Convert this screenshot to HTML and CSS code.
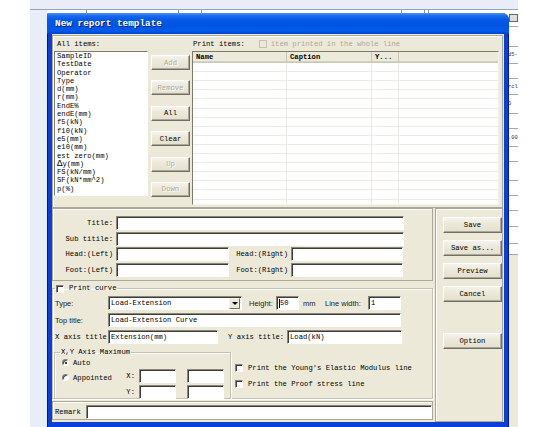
FILE: index.html
```html
<!DOCTYPE html>
<html lang="en">
<head>
    <meta charset="UTF-8">
    <meta name="viewport" content="width=device-width, initial-scale=1.0">
    <title>New report template</title>
    <link rel="stylesheet" href="styles.css">
</head>
<body>
<div class="desk">

    <!-- window behind the dialog -->
    <div class="backwin">
        <div class="back-top"></div>
        <div class="back-body">
            <span class="first"></span><span></span><span></span><span></span><span></span><span></span><span></span>
            <div class="back-side">
                <div><span class="bs-icon"></span></div>
                <div></div>
                <div>d5-</div>
                <div></div>
                <div>rcl</div>
                <div>D</div>
                <div></div>
                <div>.00</div>
                <div></div>
                <div></div>
                <div></div>
                <div></div>
                <div></div>
                <div></div>
                <div></div>
                <div class="bs-end"></div>
            </div>
        </div>
    </div>

    <div class="dialog">
        <div class="titlebar">New report template</div>
        <div class="client">

            <div class="panel items">
                <div class="col-all">
                    <div class="lbl">All items:</div>
                    <div class="listbox">
                        <div>SampleID</div>
                        <div>TestDate</div>
                        <div>Operator</div>
                        <div>Type</div>
                        <div>d(mm)</div>
                        <div>r(mm)</div>
                        <div>EndE%</div>
                        <div>endE(mm)</div>
                        <div>f5(kN)</div>
                        <div>f10(kN)</div>
                        <div>e5(mm)</div>
                        <div>e10(mm)</div>
                        <div>est zero(mm)</div>
                        <div><span class="delta">Δ</span>y(mm)</div>
                        <div>FS(kN/mm)</div>
                        <div>SF(kN*mm^2)</div>
                        <div>p(%)</div>
                    </div>
                </div>
                <div class="col-btns">
                    <button class="btn" disabled>Add</button>
                    <button class="btn" disabled>Remove</button>
                    <button class="btn">All</button>
                    <button class="btn">Clear</button>
                    <button class="btn" disabled>Up</button>
                    <button class="btn" disabled>Down</button>
                </div>
                <div class="col-print">
                    <div class="lbl print-head">
                        <span>Print items:</span>
                        <span class="chk off"></span>
                        <span class="dim">item printed in the whole line</span>
                    </div>
                    <div class="listview">
                        <div class="lv-head">
                            <span class="c-name">Name</span>
                            <span class="c-cap">Caption</span>
                            <span class="c-y">Y...</span>
                            <span class="c-rest"></span>
                        </div>
                        <div class="lv-body">
                            <span class="c-name"></span>
                            <span class="c-cap"></span>
                            <span class="c-y"></span>
                            <span class="c-rest"></span>
                        </div>
                    </div>
                </div>
            </div>

            <div class="lower">
                <div class="lower-left">
                    <div class="panel heads">
                        <label class="rl">Title:</label>
                        <input class="fld span3" type="text">
                        <label class="rl">Sub titile:</label>
                        <input class="fld span3" type="text">
                        <label class="rl">Head:(Left)</label>
                        <input class="fld" type="text">
                        <label class="rl">Head:(Right)</label>
                        <input class="fld" type="text">
                        <label class="rl">Foot:(Left)</label>
                        <input class="fld" type="text">
                        <label class="rl">Foot:(Right)</label>
                        <input class="fld" type="text">
                    </div>

                    <fieldset class="group curve">
                        <legend><span class="chk"></span>Print curve</legend>
                        <div class="row">
                            <span class="sans w-lab">Type:</span>
                            <div class="fld combo"><span>Load-Extension</span><span class="drop"></span></div>
                            <span class="sans w-height">Height:</span>
                            <div class="fld w-hin"><span class="caret"></span>50</div>
                            <span class="sans w-mm">mm</span>
                            <span class="sans w-lw">Line width:</span>
                            <input class="fld w-lwin" type="text" value="1">
                        </div>
                        <div class="row">
                            <span class="sans w-lab">Top title:</span>
                            <input class="fld w-top" type="text" value="Load-Extension Curve">
                        </div>
                        <div class="row">
                            <span class="w-lab">X axis title</span>
                            <input class="fld w-x" type="text" value="Extension(mm)">
                            <span class="w-ylab">Y axis title:</span>
                            <input class="fld w-y" type="text" value="Load(kN)">
                        </div>
                        <div class="row bottom">
                            <fieldset class="group axis">
                                <legend>X,Y Axis Maximum</legend>
                                <div class="radio-row"><span class="radio on"></span>Auto</div>
                                <div class="axis-grid">
                                    <div class="radio-row"><span class="radio"></span>Appointed</div>
                                    <span class="xy">X:</span>
                                    <input class="fld" type="text">
                                    <input class="fld" type="text">
                                    <span></span>
                                    <span class="xy">Y:</span>
                                    <input class="fld" type="text">
                                    <input class="fld" type="text">
                                </div>
                            </fieldset>
                            <div class="checks">
                                <div class="check-row"><span class="chk"></span>Print the Young's Elastic Modulus line</div>
                                <div class="check-row"><span class="chk"></span>Print the Proof stress line</div>
                            </div>
                        </div>
                    </fieldset>

                    <div class="panel remark">
                        <span class="w-rem">Remark</span>
                        <input class="fld" type="text">
                    </div>
                </div>

                <div class="panel side">
                    <button class="btn big">Save</button>
                    <button class="btn big">Save as...</button>
                    <button class="btn big">Preview</button>
                    <button class="btn big">Cancel</button>
                    <button class="btn big option">Option</button>
                </div>
            </div>

        </div>
    </div>
</div>
</body>
</html>
```

FILE: styles.css
```css
* {
    box-sizing: border-box;
}
body {
    margin: 0;
    background: #fff;
    font-family: "Liberation Mono", "DejaVu Sans Mono", monospace;
    font-size: 7.2px;
    color: #000;
}
.desk {
    position: relative;
    width: 550px;
    height: 427px;
    overflow: hidden;
}

/* window behind */
.backwin {
    position: absolute;
    left: 30px;
    top: 0;
    width: 488px;
    height: 427px;
    background: #e8edf7;
    display: flex;
    flex-direction: column;
}
.back-top {
    height: 10px;
    border-bottom: 1px solid #9ca4b2;
}
.back-body {
    flex: 1;
    display: grid;
    grid-template-columns: 56px 92px 23px 200px 23px 4px 80px 10px;
}
.back-body > span {
    background: #fff;
    border-left: 1px solid #8d8d8d;
}
.back-body > span.first {
    border-left: 0;
    background: linear-gradient(to right, #e8edf7 17px, #fff 17px);
}
.back-side {
    display: grid;
    grid-template-rows: 17px 20px 17px 15px 16px 19px 15px 18px 15px 19px 15px 15px 16px 17px 11px 1fr;
    background: #fff;
    overflow: hidden;
    font-size: 5.4px;
    color: #333;
    white-space: nowrap;
}
.back-side > div {
    border-bottom: 1px solid #a7a7a7;
    overflow: hidden;
    display: flex;
    align-items: center;
}
.back-side > .bs-end {
    background: #ece9d8;
    border: 0;
}
.bs-icon {
    width: 9px;
    height: 8px;
    margin-left: 1px;
    border: 1px solid #666;
    background: #ddd;
}

/* dialog */
.dialog {
    position: absolute;
    left: 47px;
    top: 13px;
    width: 462px;
    height: 416px;
    background: #0a40d8;
    border: 1px solid #001a80;
    border-top: 0;
    border-radius: 2px 7px 0 0;
    display: flex;
    flex-direction: column;
}
.titlebar {
    height: 21px;
    margin: 0 -1px;
    padding-left: 8px;
    display: flex;
    align-items: center;
    color: #fff;
    font-weight: bold;
    font-size: 9.4px;
    text-shadow: 1px 1px #0a1e80;
    border-radius: 2px 7px 0 0;
    background: linear-gradient(to bottom, #4a93f5 0, #1768ec 3px, #0558e6 7px, #0054e3 13px, #025ae9 18px, #0040cc 21px);
}
.client {
    height: 388px;
    margin: 0 4px;
    padding: 1px 1px 0 0;
    background: #ece9d8;
    display: flex;
    flex-direction: column;
}
.panel {
    border: 1px solid #aca899;
    box-shadow: inset 1px 1px #fff;
}

/* top panel */
.items {
    height: 173px;
    display: flex;
    padding-left: 1px;
}
.lbl {
    height: 15px;
    line-height: 16px;
    padding-left: 3px;
}
.col-all {
    width: 94px;
}
.listbox {
    height: 145px;
    background: #fff;
    border: 1px solid;
    border-color: #7d7a6c #fff #fff #7d7a6c;
    padding: 0 0 0 2px;
    line-height: 8.3px;
    white-space: nowrap;
    overflow: hidden;
}
.delta {
    font-size: 9px;
}
.col-btns {
    width: 39px;
    margin-left: 3px;
    padding-top: 19px;
    display: flex;
    flex-direction: column;
    gap: 10.4px;
}
.btn {
    font: inherit;
    color: #000;
    height: 15px;
    padding: 0;
    background: linear-gradient(#f4f3ee, #ece9d8 40%, #e3e0d0);
    border: 1px solid;
    border-color: #fff #716f64 #716f64 #fff;
    box-shadow: inset -1px -1px #aca899;
}
.btn:disabled {
    color: #aca899;
    text-shadow: 1px 1px #fff;
}
.col-print {
    width: 307px;
    margin-left: 2px;
}
.print-head {
    display: flex;
    align-items: center;
    padding-left: 1px;
}
.print-head .chk {
    margin: 0 4px 0 14px;
}
.dim {
    color: #aca899;
}
.chk {
    display: inline-block;
    width: 8px;
    height: 8px;
    background: #fff;
    border: 1px solid;
    border-color: #808080 #fff #fff #808080;
    box-shadow: inset 1px 1px #404040;
    flex: none;
}
.chk.off {
    background: #ece9d8;
    border-color: #c4c1b3;
    box-shadow: none;
}
.listview {
    height: 154px;
    border: 1px solid;
    border-color: #7d7a6c #f4f3ee #f4f3ee #7d7a6c;
    background: #fff;
    display: flex;
    flex-direction: column;
}
.lv-head,
.lv-body {
    display: flex;
}
.lv-head {
    height: 11px;
    background: #ebeadb;
    border-bottom: 1px solid #cbc7b8;
    box-shadow: inset 0 -1px #d6d2c2;
    font-weight: bold;
    line-height: 10px;
}
.lv-head span {
    padding-left: 3px;
    border-right: 1px solid #c9c6b6;
}
.lv-body {
    flex: 1;
    background: repeating-linear-gradient(to bottom, #fff 0, #fff 8.1px, #eceae2 8.1px, #eceae2 9.1px);
}
.lv-body span {
    border-right: 1px solid #ecebe2;
}
.c-name { width: 94px; }
.c-cap { width: 85px; }
.c-y { width: 27px; }
.lv-head .c-rest,
.lv-body .c-rest {
    flex: 1;
    border-right: 0;
}

/* lower half */
.lower {
    flex: 1;
    display: flex;
}
.lower-left {
    width: 381px;
    display: flex;
    flex-direction: column;
}
.fld {
    font: inherit;
    color: #000;
    height: 14px;
    background: #fff;
    border: 1px solid;
    border-color: #8a877a #fff #fff #8a877a;
    box-shadow: inset 1px 1px #3c3c3c;
    padding: 0 2px;
    display: flex;
    align-items: center;
    white-space: nowrap;
    margin: 0;
}
.heads {
    height: 73px;
    padding: 7px 0 0 1px;
    display: grid;
    grid-template-columns: 62px 113px 62px 112px;
    grid-auto-rows: 14px;
    row-gap: 1.5px;
}
.rl {
    text-align: right;
    padding-right: 3px;
    line-height: 14px;
    white-space: nowrap;
}
.span3 {
    grid-column: span 3;
    width: 288px;
}

.group {
    margin: 0;
    border: 1px solid #c5c2b2;
    box-shadow: inset 1px 1px #fff, 1px 1px #fff;
    min-width: 0;
}
.group legend {
    padding: 0 1px;
    height: 9px;
    line-height: 9px;
    display: flex;
    align-items: center;
    white-space: nowrap;
}
.curve {
    height: 115px;
    margin-top: 3px;
    padding: 0 0 0 2px;
}
.curve legend .chk {
    margin-right: 5px;
}
.row {
    display: flex;
    align-items: center;
    height: 14px;
    margin-top: 3px;
    white-space: nowrap;
}
.sans {
    font-family: "Liberation Sans", Arial, sans-serif;
    font-size: 7.5px;
    color: #222;
}
.w-lab { width: 53px; flex: none; }
.combo {
    width: 134px;
    justify-content: space-between;
    padding-right: 1px;
}
.drop {
    width: 11px;
    height: 11px;
    background: #ece9d8;
    border: 1px solid;
    border-color: #f4f3ee #716f64 #716f64 #f4f3ee;
    position: relative;
}
.drop::after {
    content: "";
    position: absolute;
    left: 2px;
    top: 3px;
    border: 3px solid transparent;
    border-top: 3px solid #000;
    border-bottom: 0;
}
.w-height { margin-left: 7px; width: 27px; }
.w-hin { width: 23px; }
.caret {
    display: inline-block;
    width: 1px;
    height: 9px;
    background: #000;
}
.w-mm { margin-left: 4px; width: 22px; }
.w-lw { width: 43px; }
.w-lwin { width: 33px; }
.w-top { width: 293px; }
.w-x { width: 110px; }
.w-ylab { margin-left: 10px; width: 59px; }
.w-y { width: 115px; }

.row.bottom {
    height: 51px;
    margin-top: 4px;
    align-items: flex-start;
}
.axis {
    width: 177px;
    height: 51px;
    margin-left: -1px;
    padding: 0 0 0 7px;
}
.axis legend {
    margin-left: -2px;
}
.radio-row {
    display: flex;
    align-items: center;
    height: 9px;
    margin-top: 1px;
}
.radio {
    width: 7px;
    height: 7px;
    border-radius: 50%;
    background: #fff;
    border: 1px solid;
    border-color: #808080 #fff #fff #808080;
    box-shadow: inset 1px 1px #404040;
    margin-right: 4px;
    position: relative;
}
.radio.on::after {
    content: "";
    position: absolute;
    left: 1.5px;
    top: 1.5px;
    width: 2.5px;
    height: 2.5px;
    border-radius: 50%;
    background: #000;
}
.axis-grid {
    display: grid;
    grid-template-columns: 56px 21px 37px 37px;
    column-gap: 0;
    grid-auto-rows: 14px;
    row-gap: 2px;
    margin-top: 2px;
    align-items: center;
}
.axis-grid .fld:last-child,
.axis-grid .fld:nth-child(4) {
    margin-left: 11px;
}
.axis-grid .fld {
    width: 37px;
}
.axis-grid .radio-row {
    margin-top: 3px;
}
.xy {
    text-align: right;
    padding-right: 4px;
    width: 21px;
}
.checks {
    margin-left: 4px;
    padding-top: 15px;
}
.check-row {
    display: flex;
    align-items: center;
    height: 10px;
    margin-bottom: 6px;
}
.check-row .chk {
    margin-right: 5px;
}

.remark {
    height: 19px;
    margin-top: 2px;
    padding: 3px 0 0 2px;
    display: flex;
    align-items: flex-start;
}
.w-rem {
    width: 31px;
    line-height: 14px;
}
.remark .fld {
    flex: 1;
}

.side {
    width: 68px;
    margin-left: 2px;
    padding: 8px 0 0 7px;
    display: flex;
    flex-direction: column;
    align-items: flex-start;
    gap: 7px;
}
.btn.big {
    width: 59px;
    height: 16px;
}
.btn.option {
    margin-top: 24px;
}
```
